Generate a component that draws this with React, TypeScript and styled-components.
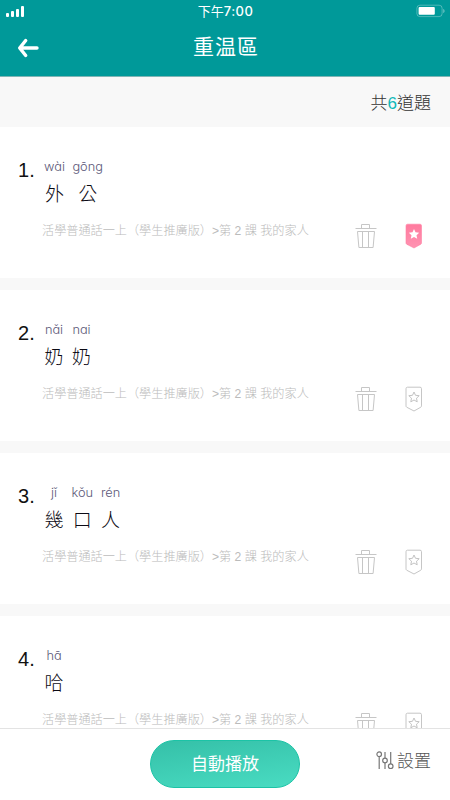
import React from 'react';
import styled, { createGlobalStyle } from 'styled-components';

const GlobalStyle = createGlobalStyle`
  * { box-sizing: border-box; }
  html, body { margin: 0; padding: 0; background: #fff; }
  body { font-family: "Noto Sans CJK TC", "Noto Sans", sans-serif; }
`;

const Screen = styled.div`
  width: 450px;
  height: 800px;
  display: flex;
  flex-direction: column;
  overflow: hidden;
  background: #f8f8f8;
`;

const Header = styled.header`
  height: 77px;
  flex: none;
  background: #009999;
  border-bottom: 1px solid #7fb5b5;
  color: #fff;
`;

const StatusBar = styled.div`
  display: grid;
  grid-template-columns: 1fr auto 1fr;
  align-items: center;
  height: 22px;
  padding: 0 5px 0 6px;
`;

const Signal = styled.div`
  display: flex;
  align-items: flex-end;
  gap: 2px;
  height: 11px;
`;

const SignalBar = styled.span<{ $height: number }>`
  width: 3px;
  height: ${(p) => p.$height}px;
  border-radius: 1px;
  background: #fff;
`;

const Clock = styled.time`
  display: flex;
  align-items: center;
  font-size: 13px;
  line-height: 22px;
  font-weight: 400;
`;

const ClockDigits = styled.span`
  font-family: Inter, sans-serif;
  font-size: 13px;
  font-weight: 500;
  letter-spacing: 0.5px;
`;

const BatterySlot = styled.div`
  display: flex;
  justify-content: flex-end;
`;

const NavBar = styled.div`
  display: grid;
  grid-template-columns: 60px 1fr 60px;
  align-items: center;
  height: 50px;
`;

const BackButton = styled.button`
  display: flex;
  padding: 2px 0 0 17px;
  border: 0;
  background: none;
`;

const Title = styled.h1`
  margin: -4px 0 0 2px;
  font-size: 21px;
  line-height: 30px;
  font-weight: 400;
  letter-spacing: 1px;
  text-align: center;
`;

const CountBar = styled.div`
  flex: none;
  height: 50px;
  padding-right: 19px;
  font-size: 17px;
  line-height: 49px;
  font-weight: 300;
  color: #333;
  text-align: right;
`;

const CountNumber = styled.span`
  font-family: "Liberation Sans", sans-serif;
  font-size: 17px;
  color: #10b8b8;
`;

const List = styled.main`
  flex: 1;
  min-height: 0;
  display: flex;
  flex-direction: column;
  gap: 12px;
  overflow: hidden;
`;

const Card = styled.article`
  flex: none;
  display: grid;
  grid-template-columns: 26px 1fr;
  height: 151px;
  padding: 31px 27px 0 18px;
  background: #fff;
`;

const Index = styled.span`
  font-family: "Liberation Sans", Arial, sans-serif;
  font-size: 20px;
  line-height: 24px;
  font-weight: 400;
  color: #111;
`;

const CardBody = styled.div`
  display: flex;
  flex-direction: column;
`;

const Word = styled.div`
  display: flex;
  gap: 7.5px;
`;

const Syllable = styled.div`
  display: flex;
  flex-direction: column;
  align-items: center;
  min-width: 20px;
`;

const Pinyin = styled.span`
  font-family: Inter, sans-serif;
  font-feature-settings: "cv11";
  font-size: 12.8px;
  line-height: 18px;
  font-weight: 300;
  color: #5c5878;
`;

const Hanzi = styled.span`
  font-size: 19px;
  line-height: 28px;
  margin-top: 3px;
  font-weight: 300;
  color: #0c0a14;
`;

const CardFooter = styled.div`
  display: flex;
  align-items: flex-start;
  margin: 14px 0 0 -2px;
`;

const Source = styled.span`
  flex: 1;
  font-family: "Liberation Sans", "Noto Sans CJK TC", sans-serif;
  font-size: 12.15px;
  line-height: 20px;
  font-weight: 300;
  color: #bbb;
  white-space: pre;
`;

const Actions = styled.div`
  display: flex;
  gap: 28px;
  padding-top: 2px;
`;

const IconButton = styled.button`
  display: flex;
  padding: 0;
  border: 0;
  background: none;
`;

const Footer = styled.footer`
  flex: none;
  display: grid;
  grid-template-columns: 1fr 150px 1fr;
  height: 72px;
  padding-top: 11px;
  border-top: 1px solid #e3e3e3;
  background: #fff;
`;

const PlayButton = styled.button`
  grid-column: 2;
  height: 48px;
  padding: 0 0 3px;
  border: 1px solid #1cc3a6;
  border-radius: 24px;
  background: linear-gradient(172deg, #35c0a8, #49dcc2);
  font-family: inherit;
  font-size: 17px;
  font-weight: 400;
  color: #fff;
`;

const SettingsButton = styled.button`
  display: flex;
  justify-content: flex-end;
  align-items: center;
  gap: 3px;
  height: 40px;
  padding: 0 19px 0 0;
  border: 0;
  background: none;
  font-family: inherit;
  font-size: 17px;
  line-height: 24px;
  font-weight: 300;
  color: #555;
`;

const BackIcon = () => (
  <svg width="23" height="20" viewBox="0 0 23 20" fill="none" stroke="#fff" strokeWidth="3.4" strokeLinecap="round" strokeLinejoin="round">
    <path d="M20 10H3M8.700 2.500L2.700 10L8.700 17.500" />
  </svg>
);

const BatteryIcon = () => (
  <svg width="29" height="14" viewBox="0 0 29 14">
    <rect x="0.9" y="1.2" width="25.2" height="11.4" rx="3" fill="none" stroke="#fff" strokeOpacity="0.3" />
    <rect x="2.6" y="3" width="16.2" height="7.8" rx="1" fill="#fff" />
    <path d="M27.2 5v4c1-.4 1.4-1 1.4-2s-.4-1.600-1.400-2z" fill="#fff" fillOpacity="0.4" />
  </svg>
);

const TrashIcon = () => (
  <svg width="22" height="26" viewBox="0 0 22 26" fill="none" stroke="#c6c6c6" strokeWidth="1">
    <path d="M6.500 5V1.500h8V5M0.500 5.500h21M2.500 8.500h17M2.500 8.500l1.400 16h14.200l1.400-16M7.500 8.500v16M13.500 8.500v16" />
  </svg>
);

const STAR = 'M9 6l1.500 3.300 3.700.4-2.700 2.500.7 3.600L9 14l-3.200 1.800.7-3.600-2.700-2.500 3.700-.4z';

const BookmarkIcon = ({ active }: { active?: boolean }) => (
  <svg width="18" height="26" viewBox="0 0 18 26">
    <defs>
      <linearGradient id="ribbon" x1="0" y1="0" x2="0" y2="1">
        <stop offset="0" stopColor="#ff7a9e" />
        <stop offset="1" stopColor="#ff93b2" />
      </linearGradient>
    </defs>
    <path
      d="M2.500 1.200h12.500q1.500 0 1.500 1.500v17.200q0 .8-.7 1.300L9 25 1.700 21.200Q1 20.700 1 19.900V2.700q0-1.500 1.500-1.500z"
      fill={active ? 'url(#ribbon)' : 'none'}
      stroke={active ? '#ff7fa2' : '#c6c6c6'}
      strokeWidth={active ? 0.6 : 1}
      strokeLinejoin="round"
    />
    <path
      d={STAR}
      fill={active ? '#fff' : 'none'}
      stroke={active ? 'none' : '#bcbcbc'}
      strokeWidth="0.900"
      strokeLinejoin="round"
    />
  </svg>
);

const SlidersIcon = () => (
  <svg width="18" height="19" viewBox="0 0 18 19" fill="none" stroke="#777" strokeWidth="1.2">
    <circle cx="3.200" cy="3.200" r="2.300" />
    <circle cx="9" cy="9.500" r="2.300" />
    <circle cx="14.700" cy="15.200" r="2.300" />
    <path d="M3.200 5.500V18M9 1v6.200M9 11.800V18M14.700 1v11.900" />
  </svg>
);

type Question = { word: [string, string][]; marked?: boolean };

const questions: Question[] = [
  { word: [['wài', '外'], ['gōng', '公']], marked: true },
  { word: [['nǎi', '奶'], ['nai', '奶']] },
  { word: [['jǐ', '幾'], ['kǒu', '口'], ['rén', '人']] },
  { word: [['hā', '哈']] },
];

const source = '活學普通話一上（學生推廣版）>第 2 課 我的家人';

export default function App() {
  return (
    <Screen>
      <GlobalStyle />
      <Header>
        <StatusBar>
          <Signal>
            {[4, 6, 8, 11].map((h) => (
              <SignalBar key={h} $height={h} />
            ))}
          </Signal>
          <Clock>
            下午<ClockDigits>7:00</ClockDigits>
          </Clock>
          <BatterySlot>
            <BatteryIcon />
          </BatterySlot>
        </StatusBar>
        <NavBar>
          <BackButton aria-label="返回">
            <BackIcon />
          </BackButton>
          <Title>重温區</Title>
        </NavBar>
      </Header>
      <CountBar>
        共<CountNumber>6</CountNumber>道題
      </CountBar>
      <List>
        {questions.map((q, i) => (
          <Card key={i}>
            <Index>{i + 1}.</Index>
            <CardBody>
              <Word>
                {q.word.map(([pinyin, hanzi], j) => (
                  <Syllable key={j}>
                    <Pinyin>{pinyin}</Pinyin>
                    <Hanzi>{hanzi}</Hanzi>
                  </Syllable>
                ))}
              </Word>
              <CardFooter>
                <Source>{source}</Source>
                <Actions>
                  <IconButton aria-label="刪除">
                    <TrashIcon />
                  </IconButton>
                  <IconButton aria-label="收藏">
                    <BookmarkIcon active={q.marked} />
                  </IconButton>
                </Actions>
              </CardFooter>
            </CardBody>
          </Card>
        ))}
      </List>
      <Footer>
        <PlayButton>自動播放</PlayButton>
        <SettingsButton>
          <SlidersIcon />
          設置
        </SettingsButton>
      </Footer>
    </Screen>
  );
}
